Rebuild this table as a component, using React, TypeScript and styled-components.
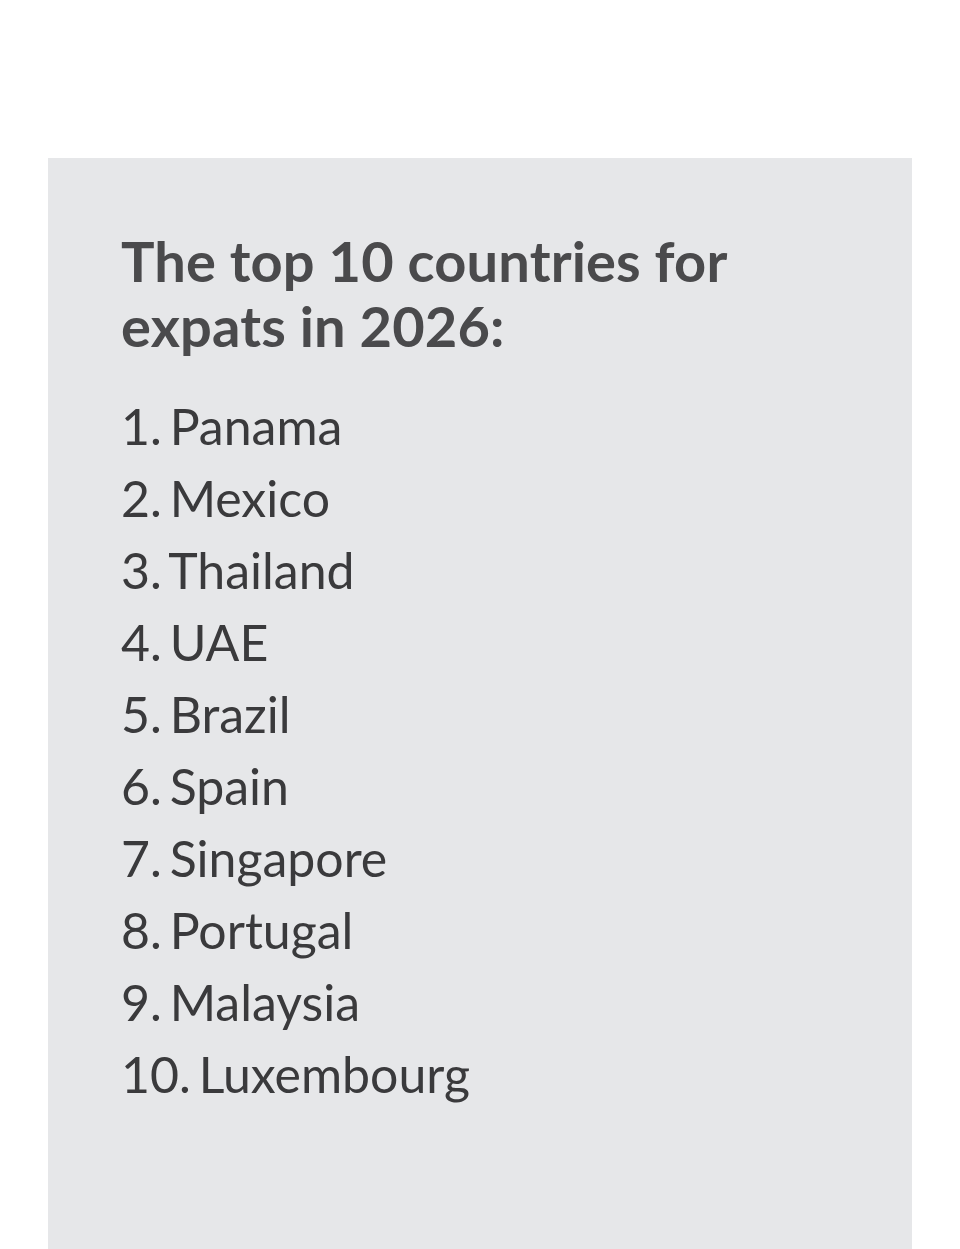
import React from "react";
import styled, { createGlobalStyle } from "styled-components";

const Global = createGlobalStyle`
  html, body { margin: 0; padding: 0; background: #ffffff; }
  body { font-family: Lato, "Noto Sans", sans-serif; }
`;

const Page = styled.div`
  padding: 158px 48px 0 48px;
  min-height: 1249px;
  box-sizing: border-box;
  display: flex;
  flex-direction: column;
`;

const Panel = styled.section`
  flex: 1;
  background: #e6e7e9;
  padding: 70px 72px 80px 73px;
`;

const Title = styled.h2`
  margin: 0;
  font-family: Lato, "Noto Sans", sans-serif;
  font-weight: 700;
  font-size: 56px;
  line-height: 65px;
  color: #4a4a4c;
  max-width: 640px;
  letter-spacing: 0.15px;
`;

const List = styled.ol`
  list-style: none;
  margin: 32px 0 0 0;
  padding: 0;
`;

const Item = styled.li`
  font-family: Lato, "Noto Sans", sans-serif;
  font-weight: 400;
  font-size: 50px;
  line-height: 72px;
  color: #3a3a3c;
  word-spacing: -5px;
`;

const countries = [
  "Panama",
  "Mexico",
  "Thailand",
  "UAE",
  "Brazil",
  "Spain",
  "Singapore",
  "Portugal",
  "Malaysia",
  "Luxembourg",
];

export default function App() {
  return (
    <>
      <Global />
      <Page>
        <Panel>
          <Title>The top 10 countries for expats in 2026:</Title>
          <List>
            {countries.map((c, i) => (
              <Item key={c}>
                {i + 1}. {c}
              </Item>
            ))}
          </List>
        </Panel>
      </Page>
    </>
  );
}
